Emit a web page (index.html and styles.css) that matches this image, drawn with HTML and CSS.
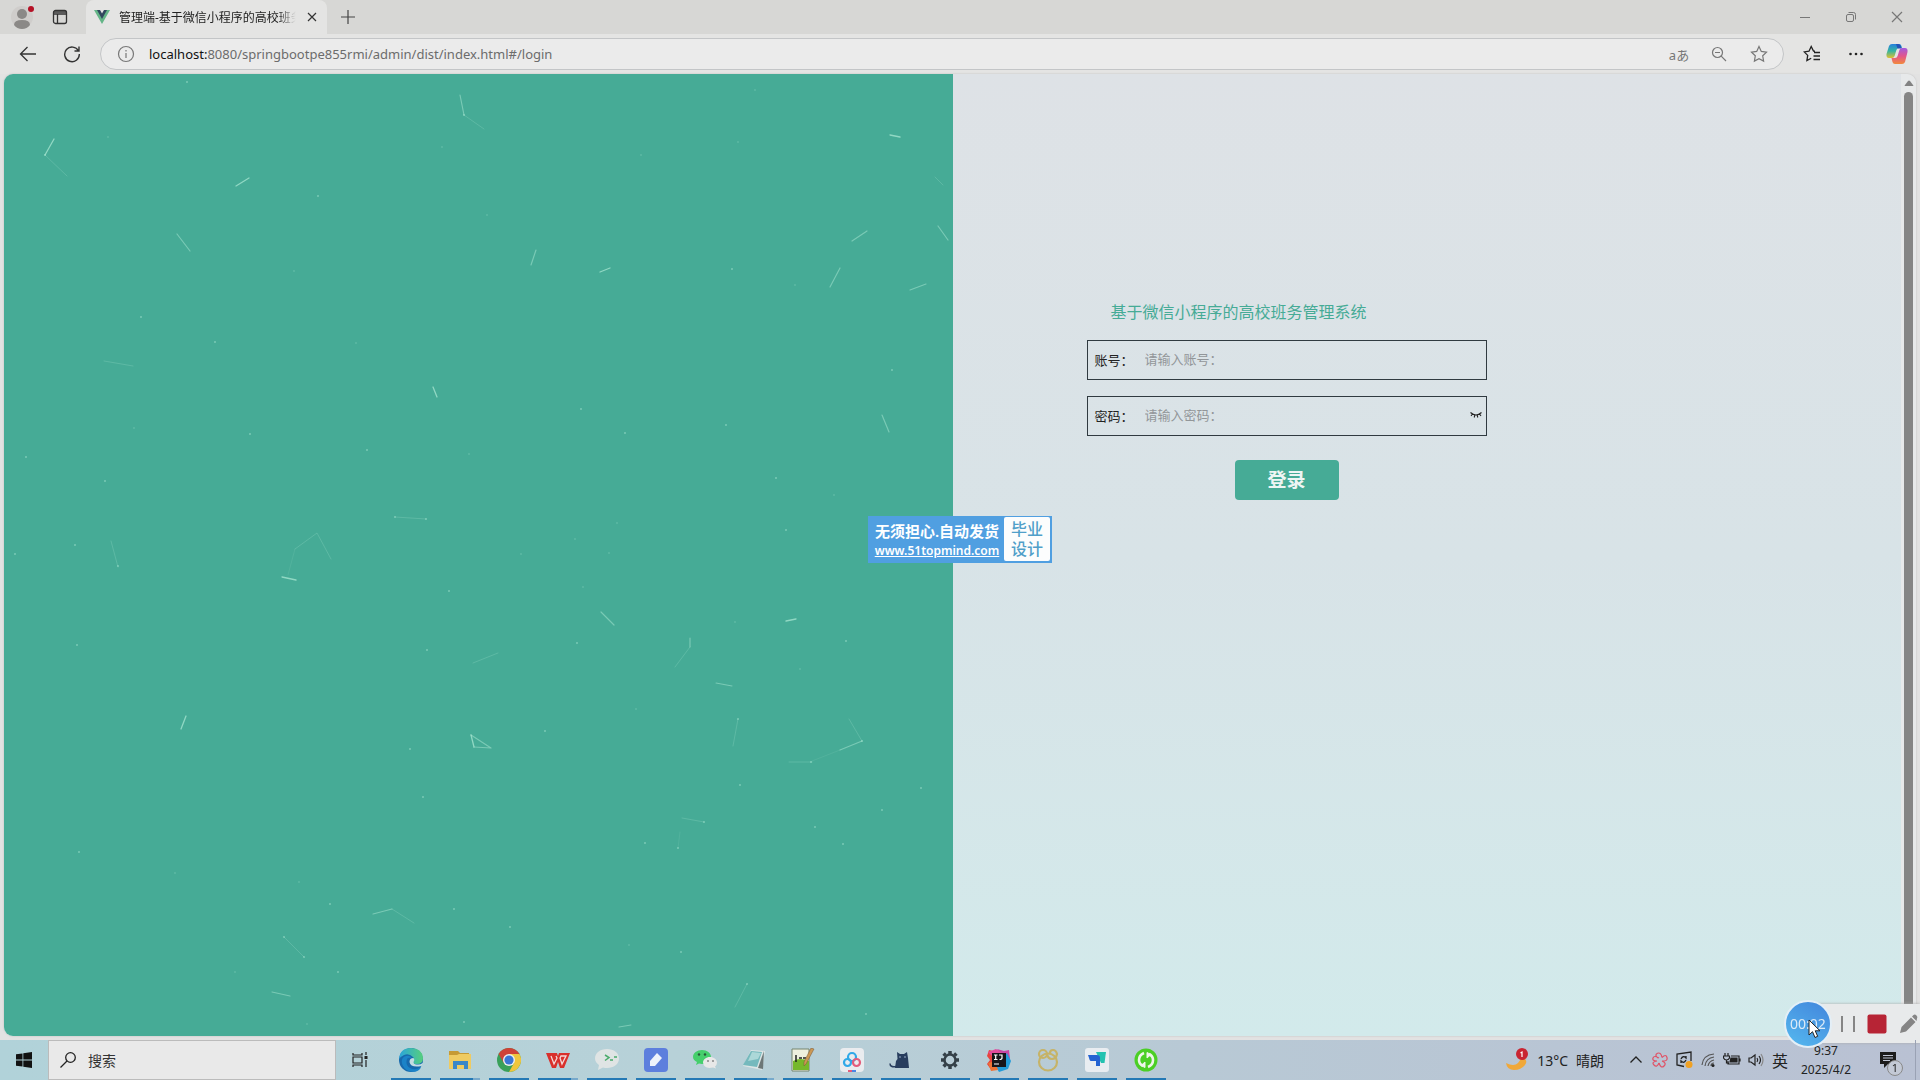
FILE: index.html
```
<!DOCTYPE html>
<html lang="zh-CN">
<head>
    <meta charset="UTF-8">
    <meta name="viewport" content="width=device-width, initial-scale=1.0">
    <title>管理端-基于微信小程序的高校班务管理系统</title>
    <link rel="stylesheet" href="styles.css">
</head>
<body>

    <!-- 浏览器标签栏 -->
    <header class="tabstrip">
        <button class="icon-btn avatar" aria-label="用户">
            <svg width="28" height="28" viewBox="0 0 28 28"><circle cx="14" cy="14" r="11" fill="#cfcdcb"/><circle cx="14" cy="11" r="5" fill="#8b8987"/><path d="M6 22q0-5 8-5t8 5q-3 4-8 4t-8-4z" fill="#8b8987"/><circle cx="23" cy="6" r="3" fill="#b51226"/></svg>
        </button>
        <button class="icon-btn tab-actions" aria-label="标签操作">
            <svg width="16" height="16" viewBox="0 0 16 16" fill="none" stroke="#333" stroke-width="1.3"><rect x="1.5" y="1.5" width="13" height="13" rx="2"/><path d="M1.5 3h13M1.5 5h13M5.5 5v9" /></svg>
        </button>
        <div class="tab">
            <svg width="16" height="16" viewBox="0 0 16 16"><path d="M0 1h4l4 7 4-7h4L8 15z" fill="#64b587"/><path d="M3 1h3l2 3.500 2-3.500h3L8 10z" fill="#31475e"/></svg>
            <span class="tab-title">管理端-基于微信小程序的高校班务</span>
            <button class="icon-btn" aria-label="关闭标签">
                <svg width="10" height="10" viewBox="0 0 10 10" stroke="#333" stroke-width="1.200"><path d="M1 1l8 8M9 1l-8 8"/></svg>
            </button>
        </div>
        <button class="icon-btn new-tab" aria-label="新建标签">
            <svg width="14" height="14" viewBox="0 0 14 14" stroke="#444" stroke-width="1.200"><path d="M7 0v14M0 7h14"/></svg>
        </button>
        <div class="window-buttons">
            <button class="icon-btn" aria-label="最小化"><svg width="12" height="12" viewBox="0 0 12 12" stroke="#777"><path d="M1 6.500h10"/></svg></button>
            <button class="icon-btn" aria-label="还原"><svg width="12" height="12" viewBox="0 0 12 12" fill="none" stroke="#777"><rect x="1.500" y="3.500" width="7" height="7" rx="1.500"/><path d="M3.500 1.500h5q2 0 2 2v5"/></svg></button>
            <button class="icon-btn" aria-label="关闭"><svg width="12" height="12" viewBox="0 0 12 12" stroke="#777" stroke-width="1.200"><path d="M1 1l10 10M11 1L1 11"/></svg></button>
        </div>
    </header>

    <!-- 地址栏 -->
    <nav class="toolbar">
        <button class="icon-btn nav-btn" aria-label="返回"><svg width="18" height="18" viewBox="0 0 18 18" fill="none" stroke="#333" stroke-width="1.300"><path d="M17 9H1.500M8.500 2L1.500 9l7 7"/></svg></button>
        <button class="icon-btn nav-btn" aria-label="刷新"><svg width="18" height="18" viewBox="0 0 18 18" fill="none" stroke="#333" stroke-width="1.400"><path d="M15.500 6A7.300 7.300 0 1 0 16.300 9M16 1.500V6h-4.500"/></svg></button>
        <div class="address">
            <svg width="18" height="18" viewBox="0 0 18 18" fill="none" stroke="#777" stroke-width="1.200"><circle cx="9" cy="9" r="7.500"/><path d="M9 8v5M9 5v1.500"/></svg>
            <div class="url" role="textbox" contenteditable="true" spellcheck="false" aria-label="地址"><b>localhost:</b>8080/springbootpe855rmi/admin/dist/index.html#/login</div>
            <button class="icon-btn translate" aria-label="翻译">aあ</button>
            <button class="icon-btn" aria-label="缩放"><svg width="16" height="16" viewBox="0 0 16 16" fill="none" stroke="#777" stroke-width="1.200"><circle cx="6.500" cy="6.500" r="5"/><path d="M4 6.500h5M10.200 10.200L15 15"/></svg></button>
            <button class="icon-btn" aria-label="收藏"><svg width="18" height="18" viewBox="0 0 18 18" fill="none" stroke="#777" stroke-width="1.200"><path d="M9 1.500l2.300 4.900 5.200.7-3.800 3.700.9 5.300L9 13.600l-4.600 2.500.9-5.300L1.500 7.100l5.200-.7z"/></svg></button>
        </div>
        <div class="toolbar-right">
            <button class="icon-btn" aria-label="收藏夹"><svg width="18" height="18" viewBox="0 0 18 18" fill="none" stroke="#222" stroke-width="1.300"><path d="M12 6.200l-1.500-.1L8.200 1.500 6 6.200l-4.800.7 3.500 3.500-.8 5.200 4.300-2.400M11 7.500h6M10.500 11h6.500M10.500 14.500H17"/></svg></button>
            <button class="icon-btn" aria-label="更多"><svg width="16" height="16" viewBox="0 0 16 16" fill="#222"><circle cx="2.500" cy="8" r="1.300"/><circle cx="8" cy="8" r="1.300"/><circle cx="13.500" cy="8" r="1.300"/></svg></button>
            <button class="icon-btn" aria-label="Copilot">
                <svg width="22" height="22" viewBox="0 0 22 22">
                    <defs>
                        <linearGradient id="cpA" x1="0" y1="0" x2="0" y2="1"><stop offset="0" stop-color="#2580de"/><stop offset=".5" stop-color="#35b5a0"/><stop offset="1" stop-color="#e0c030"/></linearGradient>
                        <linearGradient id="cpB" x1="0" y1="0" x2="0" y2="1"><stop offset="0" stop-color="#a15be0"/><stop offset=".5" stop-color="#e2558c"/><stop offset="1" stop-color="#f28a3c"/></linearGradient>
                    </defs>
                    <path d="M6 1h7q2 0 2.500 2l.5 2h-3q-2 0-2.600 2l-1.800 6q-.6 2-2.600 2H3q-3 0-2.500-4L3 3q.8-2 3-2z" fill="url(#cpA)"/>
                    <path d="M12 1q2 0 2.700 2l.8 2.500h-4L10 1z" fill="#2453b8"/>
                    <path d="M16 21H9q-2 0-2.500-2L5.500 15H9q2 0 2.600-2l1.800-6q.6-2 2.600-2h3q3 0 2.500 4L19 19q-.8 2-3 2z" fill="url(#cpB)"/>
                </svg>
            </button>
        </div>
    </nav>

    <!-- 登录页面 -->
    <div class="viewport">
        <main class="page">
            <section class="particles">
                <svg viewBox="4 74 949 962" preserveAspectRatio="xMinYMin slice" fill="none" stroke="#b9f0dc" stroke-linecap="round" aria-hidden="true">
                    <path stroke-opacity=".65" stroke-width="1.300" d="M54 139L45 155M236 186l13-8M433 387l4 10M890 135l10 2M600 272l10-4M282 577l14 3M181 729l5-13M786 621l10-2M471 735l3 12"/>
                    <path stroke-opacity=".45" stroke-width="1.200" d="M460 95l4 20M177 234l13 17M531 265l5-15M852 241l15-10M938 226l10 14M830 287l10-19M910 290l16-6M882 415l7 17M373 914l19-5M272 992l18 4M474 747l17 1M471 735l20 13M601 612l13 13M690 638v9M716 683l16 3M862 741l-22 9M619 1027l12-2"/>
                    <path stroke-opacity=".2" d="M464 115l20 14M45 155l22 21M104 361l29 5M395 517l31 2M295 549l22-16 14 26M111 541l7 26M935 177l8 8M392 909l22 14M284 937l20 20M473 663l25-10M690 647l-15 20M738 719l-5 27M849 719l13 22M812 762h-23M682 818l22 4M747 984l-12 23"/>
                    <path stroke-opacity=".1" d="M295 549l-7 26M840 750l-28 11M678 848l2-16"/>
                    <path stroke-opacity=".45" stroke-width="2" d="M45 155h0M187 82h0M464 115h0M318 196h0M141 317h0M215 342h0M26 457h0M105 481h0M250 434h0M367 450h0M75 545h0M15 554h0M118 566h0M395 517h0M426 519h0M732 269h0M581 409h0M625 433h0M726 425h0M892 370h0M776 478h0M786 530h0M77 645h0M427 650h0M449 591h0M410 749h0M423 797h0M79 852h0M330 904h0M454 909h0M338 972h0M464 1022h0M304 957h0M284 937h0M577 643h0M545 731h0M740 785h0M645 843h0M681 952h0M510 927h0M866 1014h0M921 788h0M882 810h0M815 827h0M843 844h0M846 641h0M862 741h0M811 762h0M704 822h0M738 719h0M747 984h0M678 848h0"/>
                    <path stroke-opacity=".2" stroke-width="2" d="M108 137h0M442 147h0M469 454h0M134 428h0M294 271h0M356 343h0M641 155h0M738 142h0M755 90h0M487 215h0M795 285h0M834 495h0M617 523h0M575 539h0M521 554h0M609 553h0M175 873h0M299 882h0M307 1024h0M235 972h0M583 587h0M636 709h0M629 945h0M800 669h0M735 622h0"/>
                </svg>
            </section>
            <section class="login">
                <form class="login-form">
                    <h1>基于微信小程序的高校班务管理系统</h1>
                    <div class="field">
                        <label for="username">账号：</label>
                        <input type="text" id="username" name="username" placeholder="请输入账号：">
                    </div>
                    <div class="field">
                        <label for="password">密码：</label>
                        <input type="password" id="password" name="password" placeholder="请输入密码：">
                        <button type="button" class="icon-btn" aria-label="显示密码"><svg width="12" height="8" viewBox="0 0 12 8" fill="none" stroke="#222" stroke-width="1.100"><path d="M.5 1.500Q6 6.500 11.500 1.500M2.500 3L1 4.800M4.800 4.200L4.200 6.500M7.200 4.200l.6 2.300M9.500 3L11 4.800"/></svg></button>
                    </div>
                    <button type="button" class="submit">登录</button>
                </form>
            </section>
        </main>
        <div class="scrollbar">
            <svg width="10" height="6" viewBox="0 0 10 6"><path d="M1 6q-1 0 0-1l3-4q1-1 2 0l3 4q1 1 0 1z" fill="#828282"/></svg>
            <div class="thumb"></div>
        </div>
    </div>

    <!-- 水印 -->
    <div class="watermark">
        <div class="watermark-main">
            <span>无须担心.自动发货</span>
            <a href="#">www.51topmind.com</a>
        </div>
        <div class="watermark-side">毕业<br>设计</div>
    </div>

    <!-- 录屏工具 -->
    <div class="recorder">
        <div class="timer">00:02
            <svg class="cursor" width="13" height="20" viewBox="0 0 13 20"><path d="M1 1v15l3.500-3.300L7 18.500l2.700-1.200-2.500-5.500H12z" fill="#fff" stroke="#222"/></svg>
        </div>
        <button class="icon-btn" aria-label="暂停"><svg width="14" height="16" viewBox="0 0 14 16" fill="#858585"><path d="M0 0h2v16H0zM12 0h2v16h-2z"/></svg></button>
        <button class="icon-btn" aria-label="停止"><svg width="20" height="20" viewBox="0 0 20 20"><rect width="19" height="19" x=".5" y=".5" rx="2" fill="#b72435"/></svg></button>
        <button class="icon-btn" aria-label="画笔"><svg width="20" height="20" viewBox="0 0 20 20" fill="#858585"><path d="M1 19l1.500-6L12 3.500 16.500 8 7 17.500zM13 2.500l1.500-1.500q1.500-1 3 .5t.5 3L17.500 7z"/></svg></button>
    </div>

    <!-- 任务栏 -->
    <footer class="taskbar">
        <button class="icon-btn start" aria-label="开始"><svg width="16" height="16" viewBox="0 0 16 16" fill="#111"><path d="M0 2.300l6.500-.9v6.200H0zM7.300 1.200L16 0v7.600H7.300zM0 8.400h6.500v6.200L0 13.700zM7.300 8.400H16V16l-8.700-1.200z"/></svg></button>
        <label class="search">
            <svg width="16" height="16" viewBox="0 0 16 16" fill="none" stroke="#222" stroke-width="1.300"><circle cx="10.500" cy="5.500" r="4.800"/><path d="M7 9L.5 15.500"/></svg>
            <input type="text" placeholder="搜索" aria-label="搜索">
        </label>
        <button class="icon-btn task-view" aria-label="任务视图"><svg width="16" height="16" viewBox="0 0 16 16" fill="none" stroke="#222" stroke-width="1.200"><path d="M1 1v2h9V1M1 15v-2h9v2M1 5h9v6H1zM14 0v3M14 8v7"/><path d="M12.500 4h3v3h-3z" fill="#222" stroke="none"/></svg></button>
        <div class="apps">
            <button class="app" aria-label="Edge"><svg viewBox="0 0 24 24"><defs><linearGradient id="eg" x1="0" y1="0" x2="1" y2="0"><stop offset="0" stop-color="#2aa5dc"/><stop offset="1" stop-color="#56cf7d"/></linearGradient></defs><circle cx="12" cy="12" r="12" fill="#1769ad"/><path d="M0 11Q1 0 12 0t12 10q0 6-6 6-4 0-4-2 2-3 0-5Q10 5 5 7q-4 2-5 4z" fill="url(#eg)"/><path d="M8 11q-2 6 3 9t11-1q-1 3-5 4.500Q7 25 3.500 17 1 10 7 8q4-1 5.500 2Q9 9 8 11z" fill="#1b83c8"/><path d="M14.500 10q-4 0-4 4 1 6 12 4 2-2 1-3-2 2-6 1.500-3-.5-3-2.500 1.500-2 0-4z" fill="#c5dde2"/></svg></button>
            <button class="app stacked" aria-label="文件资源管理器"><svg viewBox="0 0 24 24"><path d="M1 3h9l2 2h9v5H1z" fill="#c69a34"/><path d="M1 7h8l2-1h12v15H1z" fill="#efcb62"/><path d="M5 13h15v8h-4v-4H9v4H5z" fill="#3b87c8"/></svg></button>
            <button class="app" aria-label="Chrome"><svg viewBox="0 0 24 24"><circle cx="12" cy="12" r="12" fill="#39a05a"/><path d="M12 12L1.600 6A12 12 0 0 1 22.400 6z" fill="#ce4237"/><path d="M12 12V6h10.400A12 12 0 0 1 12 24l5-9z" fill="#efc63d"/><path d="M1.600 6l5.200 9L12 12V6z" fill="#ce4237"/><circle cx="12" cy="12" r="6" fill="#eee"/><circle cx="12" cy="12" r="4.600" fill="#3976d5"/></svg></button>
            <button class="app stacked" aria-label="WPS"><svg viewBox="0 0 24 24"><path d="M0 5h11l1 3 1-3h11l-6 15h-4l-2-6-2 6H6z" fill="#d9302c"/><path d="M5 8l3 8 3-6-1-2M14 10l2 6 4-8h-5z" fill="none" stroke="#f3d9d8" stroke-width="1.300"/></svg></button>
            <button class="app" aria-label="开发者工具"><svg viewBox="0 0 24 24"><path d="M12 1c7 0 12 4 12 9.500S19 20 12 20q-2 0-4-.5L3 22l1-5Q0 14 0 10.500C0 5 5 1 12 1z" fill="#dfe4e4"/><path d="M10 7l4 2.500-4 3M15 12h3M19 9h3" fill="none" stroke="#4aab6b" stroke-width="1.500"/></svg></button>
            <button class="app" aria-label="笔记"><svg viewBox="0 0 24 24"><rect width="24" height="24" rx="4" fill="#5d7fdd"/><path d="M6 18v-5l7-8 5 5-7 8z" fill="#eef2fb"/></svg></button>
            <button class="app" aria-label="微信"><svg viewBox="0 0 24 24"><path d="M9 2c5 0 9 3 9 7s-4 7-9 7l-3-.5L3 17l1-3Q0 12 0 9c0-4 4-7 9-7z" fill="#45cf6c"/><circle cx="6" cy="6.500" r="1.200" fill="#28583a"/><circle cx="12" cy="6.500" r="1.200" fill="#28583a"/><path d="M17 9c4 0 7 2.500 7 5.500q0 2.500-2 4l1 2-3-1q-9 2-10-5C10 11.500 13 9 17 9z" fill="#e8e8e8"/><circle cx="15" cy="13" r="1" fill="#888"/><circle cx="20" cy="13" r="1" fill="#888"/></svg></button>
            <button class="app stacked" aria-label="记事本"><svg viewBox="0 0 24 24"><path d="M9 2l14 1-3 19L1 18z" fill="#dce5e5"/><path d="M9 3l11 1-5 15L1 17z" fill="#75b9bd"/><path d="M10 4l9 1-3 6L6 13z" fill="#acd8d8"/><path d="M22 3l-1 18-5-1z" fill="#6d7777"/></svg></button>
            <button class="app" aria-label="EditPlus"><svg viewBox="0 0 24 24"><path d="M1 1h17v22H1z" fill="#eef0de" stroke="#75846f"/><path d="M2 13q7-4 16 0v9H2z" fill="#76b82b"/><path d="M5 7v7M8 10h3M12 10h3" stroke="#222" stroke-width="1.500"/><path d="M20 0l3 1-8 15-2 2V14z" fill="#cc9854" stroke="#775637" stroke-width=".5"/></svg></button>
            <button class="app" aria-label="百度网盘"><svg viewBox="0 0 24 24"><rect width="24" height="24" rx="4" fill="#eaecef"/><g fill="none" stroke-width="2.200"><circle cx="12" cy="9" r="4" stroke="#31a9e8"/><circle cx="7.500" cy="14.500" r="3.500" stroke="#31a9e8"/><circle cx="16.500" cy="14.500" r="3.500" stroke="#e35c7b"/></g><path d="M8 22h4v2H8z" fill="#e35c7b"/><path d="M12 22h4v2h-4z" fill="#4b85e5"/></svg></button>
            <button class="app" aria-label="猫"><svg viewBox="0 0 24 24"><path d="M8 4l3 2h4l3-2 1 6 1 10H6l1-7 1.500-2z" fill="#273d5e"/><path d="M7 18.500q-6 1-6-3" fill="none" stroke="#273d5e" stroke-width="1.500"/><path d="M10 9h2M15 9h2" stroke="#9bb0c8"/></svg></button>
            <button class="app" aria-label="设置"><svg viewBox="0 0 24 24" fill="none" stroke="#344048"><circle cx="12" cy="12" r="5.500" stroke-width="2.500"/><path stroke-width="3.500" d="M12 3v3M12 18v3M3 12h3M18 12h3M5.600 5.600l2 2M16.400 16.400l2 2M5.600 18.400l2-2M16.400 7.600l2-2"/></svg></button>
            <button class="app" aria-label="IntelliJ IDEA"><svg viewBox="0 0 24 24"><path d="M2 2l8 2-5 19-5-7 3-4-3-4z" fill="#e8443e"/><path d="M10 1l7 2 5-1 1 9-9-4z" fill="#c846a4"/><path d="M1 4l8-3 6 4-9 4z" fill="#e24a9b"/><path d="M20 5l4 8-3 8-9 3-3-5z" fill="#239bd8"/><path d="M1 15l7-2 3 9-7 1z" fill="#ed7335"/><path d="M5 5h14v14H5z" fill="#17151a"/><path d="M7 7h3.500M8.700 7v4.500M7 11.500h3.500M12 7h3v3q0 1.500-2.500 1.500M7 16h5" fill="none" stroke="#fff" stroke-width="1.200"/></svg></button>
            <button class="app" aria-label="Navicat"><svg viewBox="0 0 24 24" fill="none" stroke="#c6b368" stroke-width="2.200"><ellipse cx="12" cy="14" rx="9" ry="8.500"/><circle cx="7" cy="6" r="4"/><path d="M11 6q1 5 5 5t5-5q-1-4-4-4t-3 3"/></svg></button>
            <button class="app" aria-label="ToDesk"><svg viewBox="0 0 24 24"><rect width="24" height="24" rx="3" fill="#e9edf1"/><path d="M11 4h10l-1.500 11H16z" fill="#24c2b0"/><path d="M3 7h9q3 0 3 3v8h-4v-5H6q-1 0-1.300-1z" fill="#2563d2"/></svg></button>
            <button class="app" aria-label="同步"><svg viewBox="0 0 24 24"><circle cx="12" cy="12" r="11.500" fill="#4bcf25"/><path d="M10 5q-5 2-5 7 0 4 4 6M14 19q5-2 5-7 0-4-4-6" fill="none" stroke="#eef5e9" stroke-width="2.600"/><path d="M7 17.500l4-3.500v5.500zM17 6.500L13 10V4.500z" fill="#eef5e9" stroke="#eef5e9"/></svg></button>
        </div>
        <div class="tray">
            <button class="weather">
                <svg width="24" height="24" viewBox="0 0 24 24"><path d="M16 8q8 4 4 9t-11 5-8-7q8 4 12 0 3-3 3-7z" fill="#f0a83a"/><circle cx="17" cy="6" r="6" fill="#c92531"/><path d="M15.500 5L17 4v5" fill="none" stroke="#fff" stroke-width="1.200"/></svg>
                <span>13°C</span><span>晴朗</span>
            </button>
            <div class="tray-icons">
                <button class="icon-btn" aria-label="显示隐藏的图标"><svg width="16" height="16" viewBox="0 0 16 16" fill="none" stroke="#222" stroke-width="1.300"><path d="M2.500 10.500L8 5l5.500 5.500"/></svg></button>
                <button class="icon-btn" aria-label="应用"><svg width="16" height="16" viewBox="0 0 16 16" fill="none" stroke="#e05266" stroke-width="1.200"><path d="M6 6Q2 3 5.500 1.200 9 0 10 5.500M10 5.500q4-4 5 0T10 9M10 9q5 2 2 5T7 11M7 11q-2 5-5 2T5 9M5 9Q0 9 1 6t6 0"/></svg></button>
                <button class="icon-btn" aria-label="更新"><svg width="18" height="18" viewBox="0 0 18 18" fill="none" stroke="#222" stroke-width="1.300"><path d="M9 15.500L2 14V3l14-2v9M6 8q2-4 5-1V5M11 9q-2 4-5 1v2"/><circle cx="14" cy="13.500" r="3.500" fill="#f0a123" stroke="none"/></svg></button>
                <button class="icon-btn" aria-label="网络"><svg width="16" height="16" viewBox="0 0 16 16" fill="none" stroke="#555" stroke-width="1.200"><path d="M2 13Q3 3 14 2M5 14q1-8 9-9M8 14q1-5 6-6M11 14q0-3 3-3"/><circle cx="13" cy="13.500" r="1.500" fill="#222" stroke="none"/></svg></button>
                <button class="icon-btn" aria-label="电池"><svg width="18" height="16" viewBox="0 0 18 16" fill="none" stroke="#222" stroke-width="1.200"><path d="M8 4h8v8H5V9M17 6.500v3M2 1v3M5 1v3M.5 4h6v2q-1 2-3 2T.5 6zM3.500 8v3H6"/><path d="M8 6h6v4H7z" fill="#222"/></svg></button>
                <button class="icon-btn" aria-label="音量"><svg width="16" height="16" viewBox="0 0 16 16" fill="none" stroke="#222" stroke-width="1.200"><path d="M1 6v4h2l4 3V3L3 6zM9 6q1.500 2 0 4M11 4q3 4 0 8"/><path stroke="#888" d="M13 2q4 6 0 12"/></svg></button>
                <button class="ime">英</button>
            </div>
            <div class="clock"><span>9:37</span><span>2025/4/2</span></div>
            <button class="notice" aria-label="通知">
                <svg width="18" height="18" viewBox="0 0 18 18"><path d="M1 1h16v12H9l-4 4v-4H1z" fill="#1c1c1c"/><path d="M4 4.500h10M4 7h10M4 9.500h7" stroke="#bfc5d4"/></svg>
                <span class="badge">1</span>
            </button>
        </div>
    </footer>

</body>
</html>
```
FILE: styles.css
```
* {
    box-sizing: border-box;
}

body {
    margin: 0;
    min-height: 100vh;
    display: flex;
    flex-direction: column;
    background: #e2e2e2;
    font-family: "Noto Sans", "Noto Sans CJK SC", sans-serif;
    font-size: 14px;
    color: #222;
}

button, input {
    font-family: inherit;
    color: inherit;
    border: none;
    background: none;
    padding: 0;
    margin: 0;
    outline: none;
}

svg {
    display: block;
    flex: none;
}

.icon-btn {
    display: flex;
    align-items: center;
    justify-content: center;
    flex: none;
    cursor: pointer;
}

/* 标签栏 */
.tabstrip {
    display: flex;
    align-items: center;
    height: 34px;
    background: #d7d7d5;
}

.avatar {
    width: 28px;
    margin-left: 8px;
}

.tab-actions {
    width: 48px;
}

.tab {
    display: flex;
    align-items: center;
    align-self: stretch;
    width: 241px;
    margin-left: 2px;
    padding: 0 10px 0 8px;
    background: #e4e4e3;
    border-radius: 8px 8px 0 0;
}

.tab-title {
    flex: 1;
    margin-left: 9px;
    white-space: nowrap;
    font-size: 12px;
    -webkit-mask-image: linear-gradient(to right, #000 85%, transparent 94%);
    mask-image: linear-gradient(to right, #000 85%, transparent 94%);
}

.new-tab {
    width: 42px;
}

.window-buttons {
    display: flex;
    margin-left: auto;
}

.window-buttons .icon-btn {
    width: 46px;
}

/* 地址栏 */
.toolbar {
    display: flex;
    align-items: center;
    height: 40px;
    padding: 0 4px 0 6px;
    background: #e4e4e3;
}

.nav-btn {
    width: 44px;
}

.address {
    display: flex;
    align-items: center;
    flex: 1;
    height: 32px;
    margin-left: 6px;
    padding: 0 4px 0 16px;
    background: #ebebeb;
    border: 1px solid #c3c5c7;
    border-radius: 16px;
}

.address .icon-btn {
    width: 40px;
}

.url {
    flex: 1;
    margin-left: 14px;
    font-size: 13px;
    color: #6c6c6c;
    outline: none;
}

.url b {
    font-weight: normal;
    color: #111;
}

.translate {
    font-size: 13px;
    color: #777;
}

.toolbar-right {
    display: flex;
    margin-left: 6px;
}

.toolbar-right .icon-btn {
    width: 44px;
}

.toolbar-right .icon-btn:last-child {
    width: 38px;
}

/* 页面 */
.viewport {
    display: flex;
    flex: 1;
    margin: 0 4px 4px;
    border-radius: 9px;
    overflow: hidden;
    box-shadow: 0 0 2px #bbb;
}

.page {
    display: flex;
    flex: 1;
    background: linear-gradient(to bottom, #dee2e6, #d8e3e7 50%, #d2eaeb);
}

.particles {
    position: relative;
    width: 50%;
    background: #46ab96;
}

.particles svg {
    position: absolute;
    inset: 0;
    width: 100%;
    height: 100%;
}

.login {
    width: 50%;
    padding: 224px 20px 20px 134px;
}

.login-form {
    width: 400px;
    max-width: 100%;
}

.login-form h1 {
    margin: 0;
    padding: 0 24px;
    font-size: 16px;
    font-weight: normal;
    line-height: 28px;
    color: #46ab96;
}

.login-form h1 + .field {
    margin-top: 14px;
}

.field {
    display: flex;
    align-items: center;
    height: 40px;
    margin-bottom: 16px;
    padding: 0 4px 2px 7px;
    border: 1px solid #303a40;
    font-size: 13px;
}

.field label {
    width: 40px;
    white-space: nowrap;
}

.field input {
    flex: 1;
    min-width: 0;
    height: 36px;
    padding: 0 10px;
    font-size: 13px;
}

.field input::placeholder {
    color: #929699;
}

.submit {
    display: block;
    width: 104px;
    height: 40px;
    margin: 24px auto 0;
    padding-bottom: 2px;
    border-radius: 4px;
    background: #46ab96;
    color: #eef5f4;
    font-size: 19px;
    font-weight: bold;
    cursor: pointer;
}

.scrollbar {
    display: flex;
    flex-direction: column;
    align-items: center;
    width: 15px;
    padding: 6px 0 16px;
    background: #e7e9ea;
}

.thumb {
    flex: 1;
    width: 9px;
    margin-top: 6px;
    border-radius: 5px;
    background: #858585;
}

/* 水印 */
.watermark {
    position: fixed;
    top: 516px;
    left: 50%;
    display: flex;
    width: 184px;
    height: 47px;
    margin-left: -92px;
    padding: 1px 2px 2px 2px;
    background: #509fe1;
    color: #fff;
}

.watermark-main {
    display: flex;
    flex-direction: column;
    align-items: center;
    flex: 1;
    padding-top: 4px;
    white-space: nowrap;
    font-size: 15px;
    line-height: 20px;
    font-weight: 600;
}

.watermark-main a {
    color: #fff;
    font-size: 12px;
}

.watermark-side {
    width: 46px;
    border-radius: 2px;
    background: #fcfdfd;
    color: #509fc9;
    text-align: center;
    font-size: 16px;
    line-height: 20px;
    font-weight: 500;
    padding-top: 2px;
}

/* 录屏工具 */
.recorder {
    position: fixed;
    right: 0;
    bottom: 37px;
    display: flex;
    align-items: center;
    gap: 12px;
    width: 112px;
    height: 39px;
    padding-right: 2px;
    background: #e8eaeb;
    box-shadow: 0 0 3px #aaa;
}

.timer {
    position: relative;
    display: flex;
    align-items: center;
    justify-content: center;
    flex: none;
    width: 48px;
    height: 48px;
    margin-left: -24px;
    margin-right: -3px;
    border: 2px solid #e4eff7;
    border-radius: 50%;
    background: linear-gradient(30deg, #55b9ef, #4285dc);
    color: #dcebf8;
}

.cursor {
    position: absolute;
    left: 22px;
    top: 17px;
}

/* 任务栏 */
.taskbar {
    display: flex;
    align-items: center;
    height: 40px;
    background: linear-gradient(to right, #b1d2d9, #b7d1d8 35%, #b8c9d5 62%, #b9c1d3);
}

.start {
    width: 48px;
}

.search {
    display: flex;
    align-items: center;
    align-self: stretch;
    width: 288px;
    padding: 0 11px;
    background: #e9e9e9;
    border: 1px solid #bbb;
}

.search input {
    flex: 1;
    min-width: 0;
    margin-left: 12px;
    font-size: 14px;
}

.search input::placeholder {
    color: #333;
}

.task-view {
    width: 48px;
}

.apps {
    display: flex;
    align-self: stretch;
    gap: 9px;
    margin-left: 7px;
}

.app {
    width: 40px;
    height: 40px;
    padding: 8px 8px 6px;
    border-bottom: 2px solid #2479b5;
}

.app svg {
    width: 24px;
    height: 24px;
}

/* 打开了多个窗口的程序 */
.stacked {
    border-image: linear-gradient(to right, #2479b5 80%, #77a9cb 80%) 1;
    border-width: 0 0 2px;
}

.tray {
    display: flex;
    align-items: center;
    align-self: stretch;
    margin-left: auto;
    padding-right: 4px;
}

.weather {
    display: flex;
    align-items: center;
    gap: 8px;
    margin-right: 20px;
    font-size: 14px;
}

.tray-icons {
    display: flex;
    align-items: center;
}

.tray-icons button {
    width: 24px;
}

.tray-icons .ime {
    font-size: 16px;
}

.clock {
    display: flex;
    flex-direction: column;
    align-items: center;
    width: 68px;
    font-size: 12px;
    line-height: 19px;
}

.notice {
    position: relative;
    display: flex;
    align-items: center;
    justify-content: center;
    width: 56px;
    height: 40px;
    border-right: 1px solid #9aa2b4;
}

.badge {
    position: absolute;
    right: 12px;
    bottom: 4px;
    width: 16px;
    height: 16px;
    border: 1px solid #888;
    border-radius: 50%;
    background: #c3c9d5;
    font-size: 11px;
    line-height: 14px;
    text-align: center;
}
```
